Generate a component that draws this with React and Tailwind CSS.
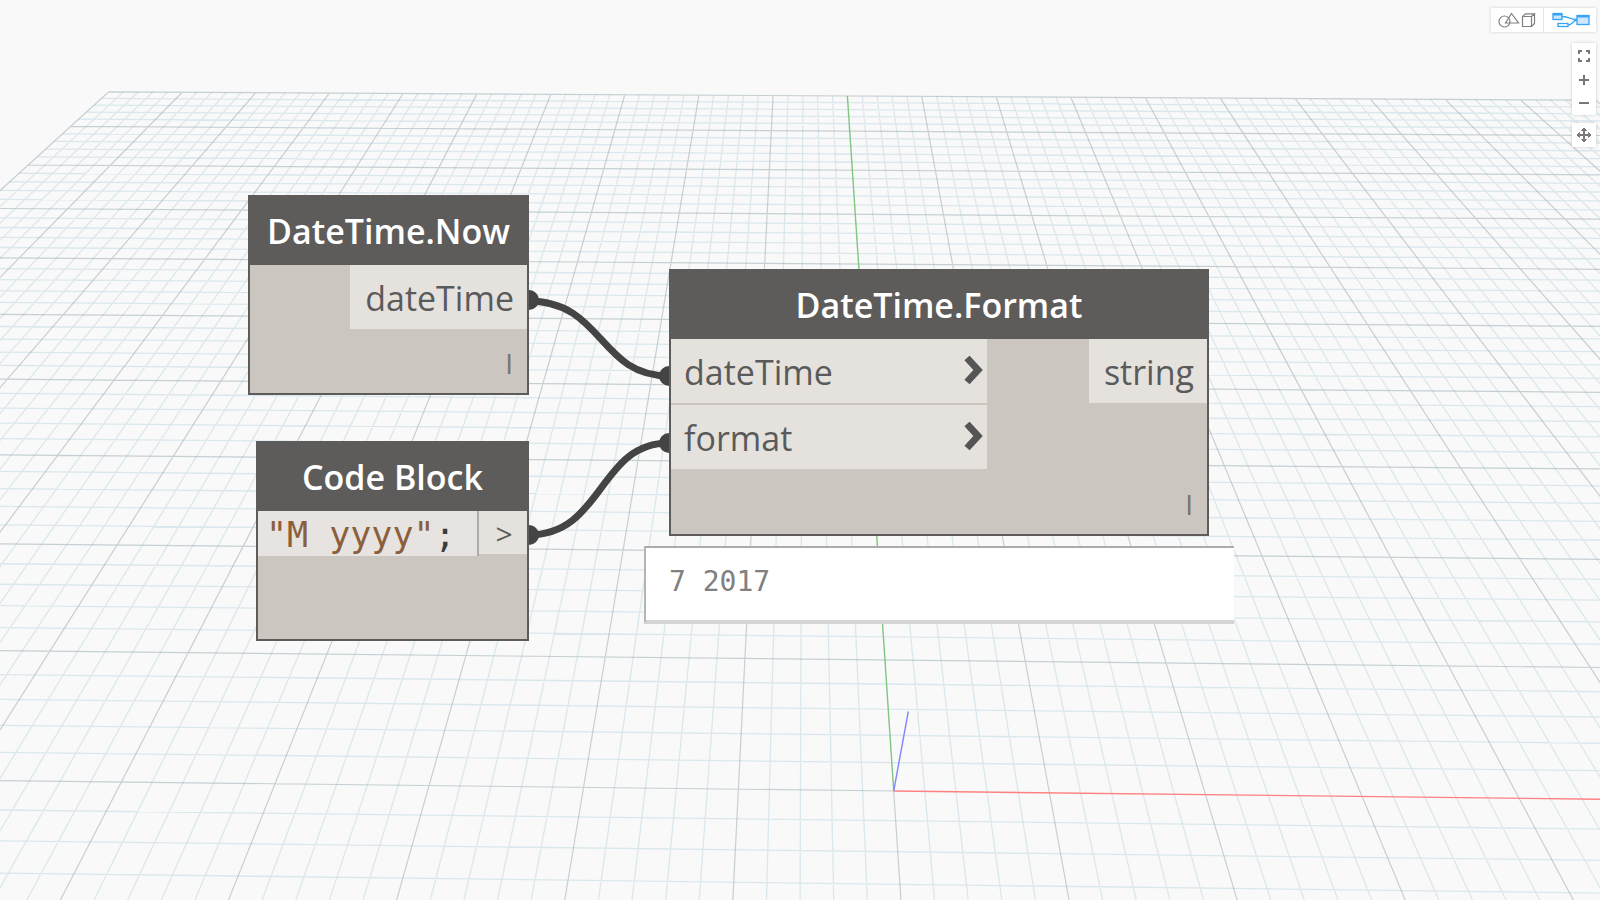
const EXTENT = 50;
const NEAR = -10;
const MAJOR = 5;

// Projects a ground-plane point (grid units) onto the viewport.
function project(u, v) {
  const i = u / MAJOR;
  const j = v / MAJOR;
  const w = -0.00135 * i + 0.1091 * j + 1;
  return [
    (154.3 * i + 87.82 * j + 893.7) / w,
    (0.75 * i - 59.03 * j + 791) / w,
  ];
}

function segment(a, b) {
  const [x1, y1] = project(a[0], a[1]);
  const [x2, y2] = project(b[0], b[1]);
  return `M${x1.toFixed(2)} ${y1.toFixed(2)}L${x2.toFixed(2)} ${y2.toFixed(2)}`;
}

function buildGrid() {
  const minor = [];
  const major = [];
  for (let u = -EXTENT; u <= EXTENT; u += 1) {
    const bucket = u % MAJOR === 0 ? major : minor;
    if (u === 0) bucket.push(segment([0, NEAR], [0, 0]));
    else bucket.push(segment([u, NEAR], [u, EXTENT]));
  }
  for (let v = NEAR; v <= EXTENT; v += 1) {
    const bucket = v % MAJOR === 0 ? major : minor;
    if (v === 0) bucket.push(segment([-EXTENT, 0], [0, 0]));
    else bucket.push(segment([-EXTENT, v], [EXTENT, v]));
  }
  return { minor: minor.join(""), major: major.join("") };
}

const grid = buildGrid();

function GroundPlane() {
  return (
    <svg
      className="absolute inset-0 h-full w-full"
      viewBox="0 0 1600 900"
      preserveAspectRatio="xMinYMin slice"
      fill="none"
      aria-hidden="true"
    >
      <path d={grid.minor} stroke="#9dc6da" strokeOpacity="0.34" strokeWidth="1.3" />
      <path d={grid.major} stroke="#8ea3ac" strokeOpacity="0.48" strokeWidth="1.2" />
      <path d={segment([0, 0], [EXTENT, 0])} stroke="#ff8080" strokeWidth="1.4" />
      <path d={segment([0, 0], [0, EXTENT])} stroke="#80c680" strokeWidth="1.4" />
      <path d="M893.7 791L908.3 711.5" stroke="#8484ff" strokeWidth="1.4" />
    </svg>
  );
}

function Wires() {
  return (
    <svg className="absolute top-0 left-0 h-[900px] w-[1600px]" fill="none" aria-hidden="true">
      <g stroke="#444444" strokeWidth="7">
        <path d="M528 301C604 301 598 376 669 376" />
        <path d="M528 535C604 535 598 443 669 443" />
      </g>
      <g fill="#444444">
        <circle cx="529" cy="300" r="10" />
        <circle cx="529" cy="535" r="10" />
        <circle cx="669" cy="376" r="10" />
        <circle cx="669" cy="443" r="10" />
      </g>
    </svg>
  );
}

function Node({ title, className, children }) {
  return (
    <section
      className={`absolute flex flex-col border-2 border-[#5e5c5a] bg-[#cbc6bf] ${className}`}
    >
      <h2 className="flex h-[68px] shrink-0 items-center justify-center bg-[#5e5c5a] text-[34px] font-semibold text-white">
        {title}
      </h2>
      {children}
    </section>
  );
}

function Port({ name, className = "", children }) {
  return (
    <div className={`flex h-16 items-center bg-[#e5e2de] text-[34px] text-[#5a5a5a] ${className}`}>
      <span className="pt-[2px]">{name}</span>
      {children}
    </div>
  );
}

function Lacing() {
  return <span className="mt-auto self-end px-[14px] pb-[9px] text-[28px] text-[#77746f]">I</span>;
}

function Chevron() {
  return (
    <svg width="20" height="30" viewBox="0 0 20 30" fill="none" aria-hidden="true">
      <path d="M3 2L14 14L3 26" stroke="#555555" strokeWidth="7" />
    </svg>
  );
}

function InputPort({ name }) {
  return (
    <Port name={name} className="justify-between pr-[3px] pl-[13px]">
      <Chevron />
    </Port>
  );
}

function GeometryIcon() {
  return (
    <svg width="38" height="16" viewBox="0 0 38 16" fill="none" stroke="#808080" strokeWidth="1.2" aria-hidden="true">
      <circle cx="6.500" cy="9.500" r="5.500" />
      <path d="M13.500 1.500L20.500 11H7.500Z" />
      <path d="M24.500 4.500H33.500V14.500H24.500ZM24.500 4.500L27.500 1.800H36.500L33.500 4.500M36.500 1.800V11.500L33.500 14.500" />
    </svg>
  );
}

function GraphIcon() {
  return (
    <svg width="38" height="16" viewBox="0 0 38 16" fill="none" stroke="#36a3f4" strokeWidth="1.3" aria-hidden="true">
      <path d="M10 4.500C16 4.500 18 7.500 25 7.500M16 13C21 13 20 8.500 25 8" />
      <rect x="1" y="1.500" width="9" height="6" fill="#cde8fc" />
      <path d="M1 2.500H10" strokeWidth="2" />
      <rect x="6" y="11.500" width="10" height="3" fill="#ffffff" />
      <rect x="25" y="3.500" width="12" height="9" fill="#cde8fc" />
      <path d="M25 4.500H37" strokeWidth="2" />
    </svg>
  );
}

function ToolButton({ label, className = "size-6", children }) {
  return (
    <button
      type="button"
      aria-label={label}
      className={`flex items-center justify-center bg-white text-[#777777] ${className}`}
    >
      {children}
    </button>
  );
}

function GlyphIcon({ d, width = "2", fill = "none" }) {
  return (
    <svg
      width="16"
      height="16"
      viewBox="0 0 16 16"
      fill={fill}
      stroke="currentColor"
      strokeWidth={width}
      aria-hidden="true"
    >
      <path d={d} />
    </svg>
  );
}

function Toolbar() {
  return (
    <nav className="absolute top-2 right-1 flex flex-col items-end">
      <div className="flex divide-x divide-[#e4e4e4] shadow-[0_0_3px_rgba(0,0,0,0.18)]">
        <ToolButton label="Geometry view" className="h-6 w-[53px]">
          <GeometryIcon />
        </ToolButton>
        <ToolButton label="Graph view" className="h-6 w-[52px] pl-[2px]">
          <GraphIcon />
        </ToolButton>
      </div>
      <div className="mt-[11px] flex flex-col shadow-[0_0_3px_rgba(0,0,0,0.18)]">
        <ToolButton label="Fit to screen">
          <GlyphIcon d="M3 7V4H6M10 4H13V7M13 11V14H10M6 14H3V11" />
        </ToolButton>
        <ToolButton label="Zoom in">
          <GlyphIcon d="M8 4V14M3 9H13" />
        </ToolButton>
        <ToolButton label="Zoom out">
          <GlyphIcon d="M3 8H13" />
        </ToolButton>
      </div>
      <div className="mt-2 flex shadow-[0_0_3px_rgba(0,0,0,0.18)]">
        <ToolButton label="Pan">
          <GlyphIcon
            width="1"
            fill="currentColor"
            d="M7.500 3.500H5.500L8 1L10.500 3.500H8.500V7.500H12.500V5.500L15 8L12.500 10.500V8.500H8.500V12.500H10.500L8 15L5.500 12.500H7.500V8.500H3.500V10.500L1 8L3.500 5.500V7.500H7.500Z"
          />
        </ToolButton>
      </div>
    </nav>
  );
}

export default function App() {
  return (
    <main className="relative h-screen min-h-[660px] w-full overflow-hidden bg-[#f9f9f9] font-['Open_Sans','Noto_Sans',sans-serif]">
      <GroundPlane />
      <Wires />

      <Node title="DateTime.Now" className="top-[195px] left-[248px] h-[200px] w-[281px]">
        <Port name="dateTime" className="self-end pr-[13px] pl-[15px]" />
        <Lacing />
      </Node>

      <Node title="Code Block" className="top-[441px] left-[256px] h-[200px] w-[273px]">
        <div className="flex items-start">
          <code className="h-[45px] grow bg-[#e6e3e0] pt-1 pl-2 font-['DejaVu_Sans_Mono',monospace] text-[35px] leading-[41px] whitespace-pre text-[#8c5f3c]">
            "M yyyy"<span className="text-[#3c3c3c]">;</span>
          </code>
          <span className="h-[45px] w-[2px] bg-[#adadad]" />
          <span className="flex h-[43px] w-[48px] items-center justify-center bg-[#e5e2de] pt-[2px] pl-[2px] text-3xl text-[#5a5a5a]">
            &gt;
          </span>
        </div>
      </Node>

      <Node title="DateTime.Format" className="top-[269px] left-[669px] h-[267px] w-[540px]">
        <div className="flex items-start justify-between">
          <div className="flex w-[316px] flex-col gap-[2px]">
            <InputPort name="dateTime" />
            <InputPort name="format" />
          </div>
          <Port name="string" className="pr-[13px] pl-[15px]" />
        </div>
        <Lacing />
      </Node>

      <output className="absolute top-[546px] left-[644px] flex h-[78px] w-[590px] items-center border-t-2 border-b-4 border-l-2 border-t-[#ababab] border-b-[#d4d4d4] border-l-[#b5b5b5] bg-white px-[23px] pb-1 font-['DejaVu_Sans_Mono',monospace] text-[28px] text-[#808080]">
        7 2017
      </output>

      <Toolbar />
    </main>
  );
}
